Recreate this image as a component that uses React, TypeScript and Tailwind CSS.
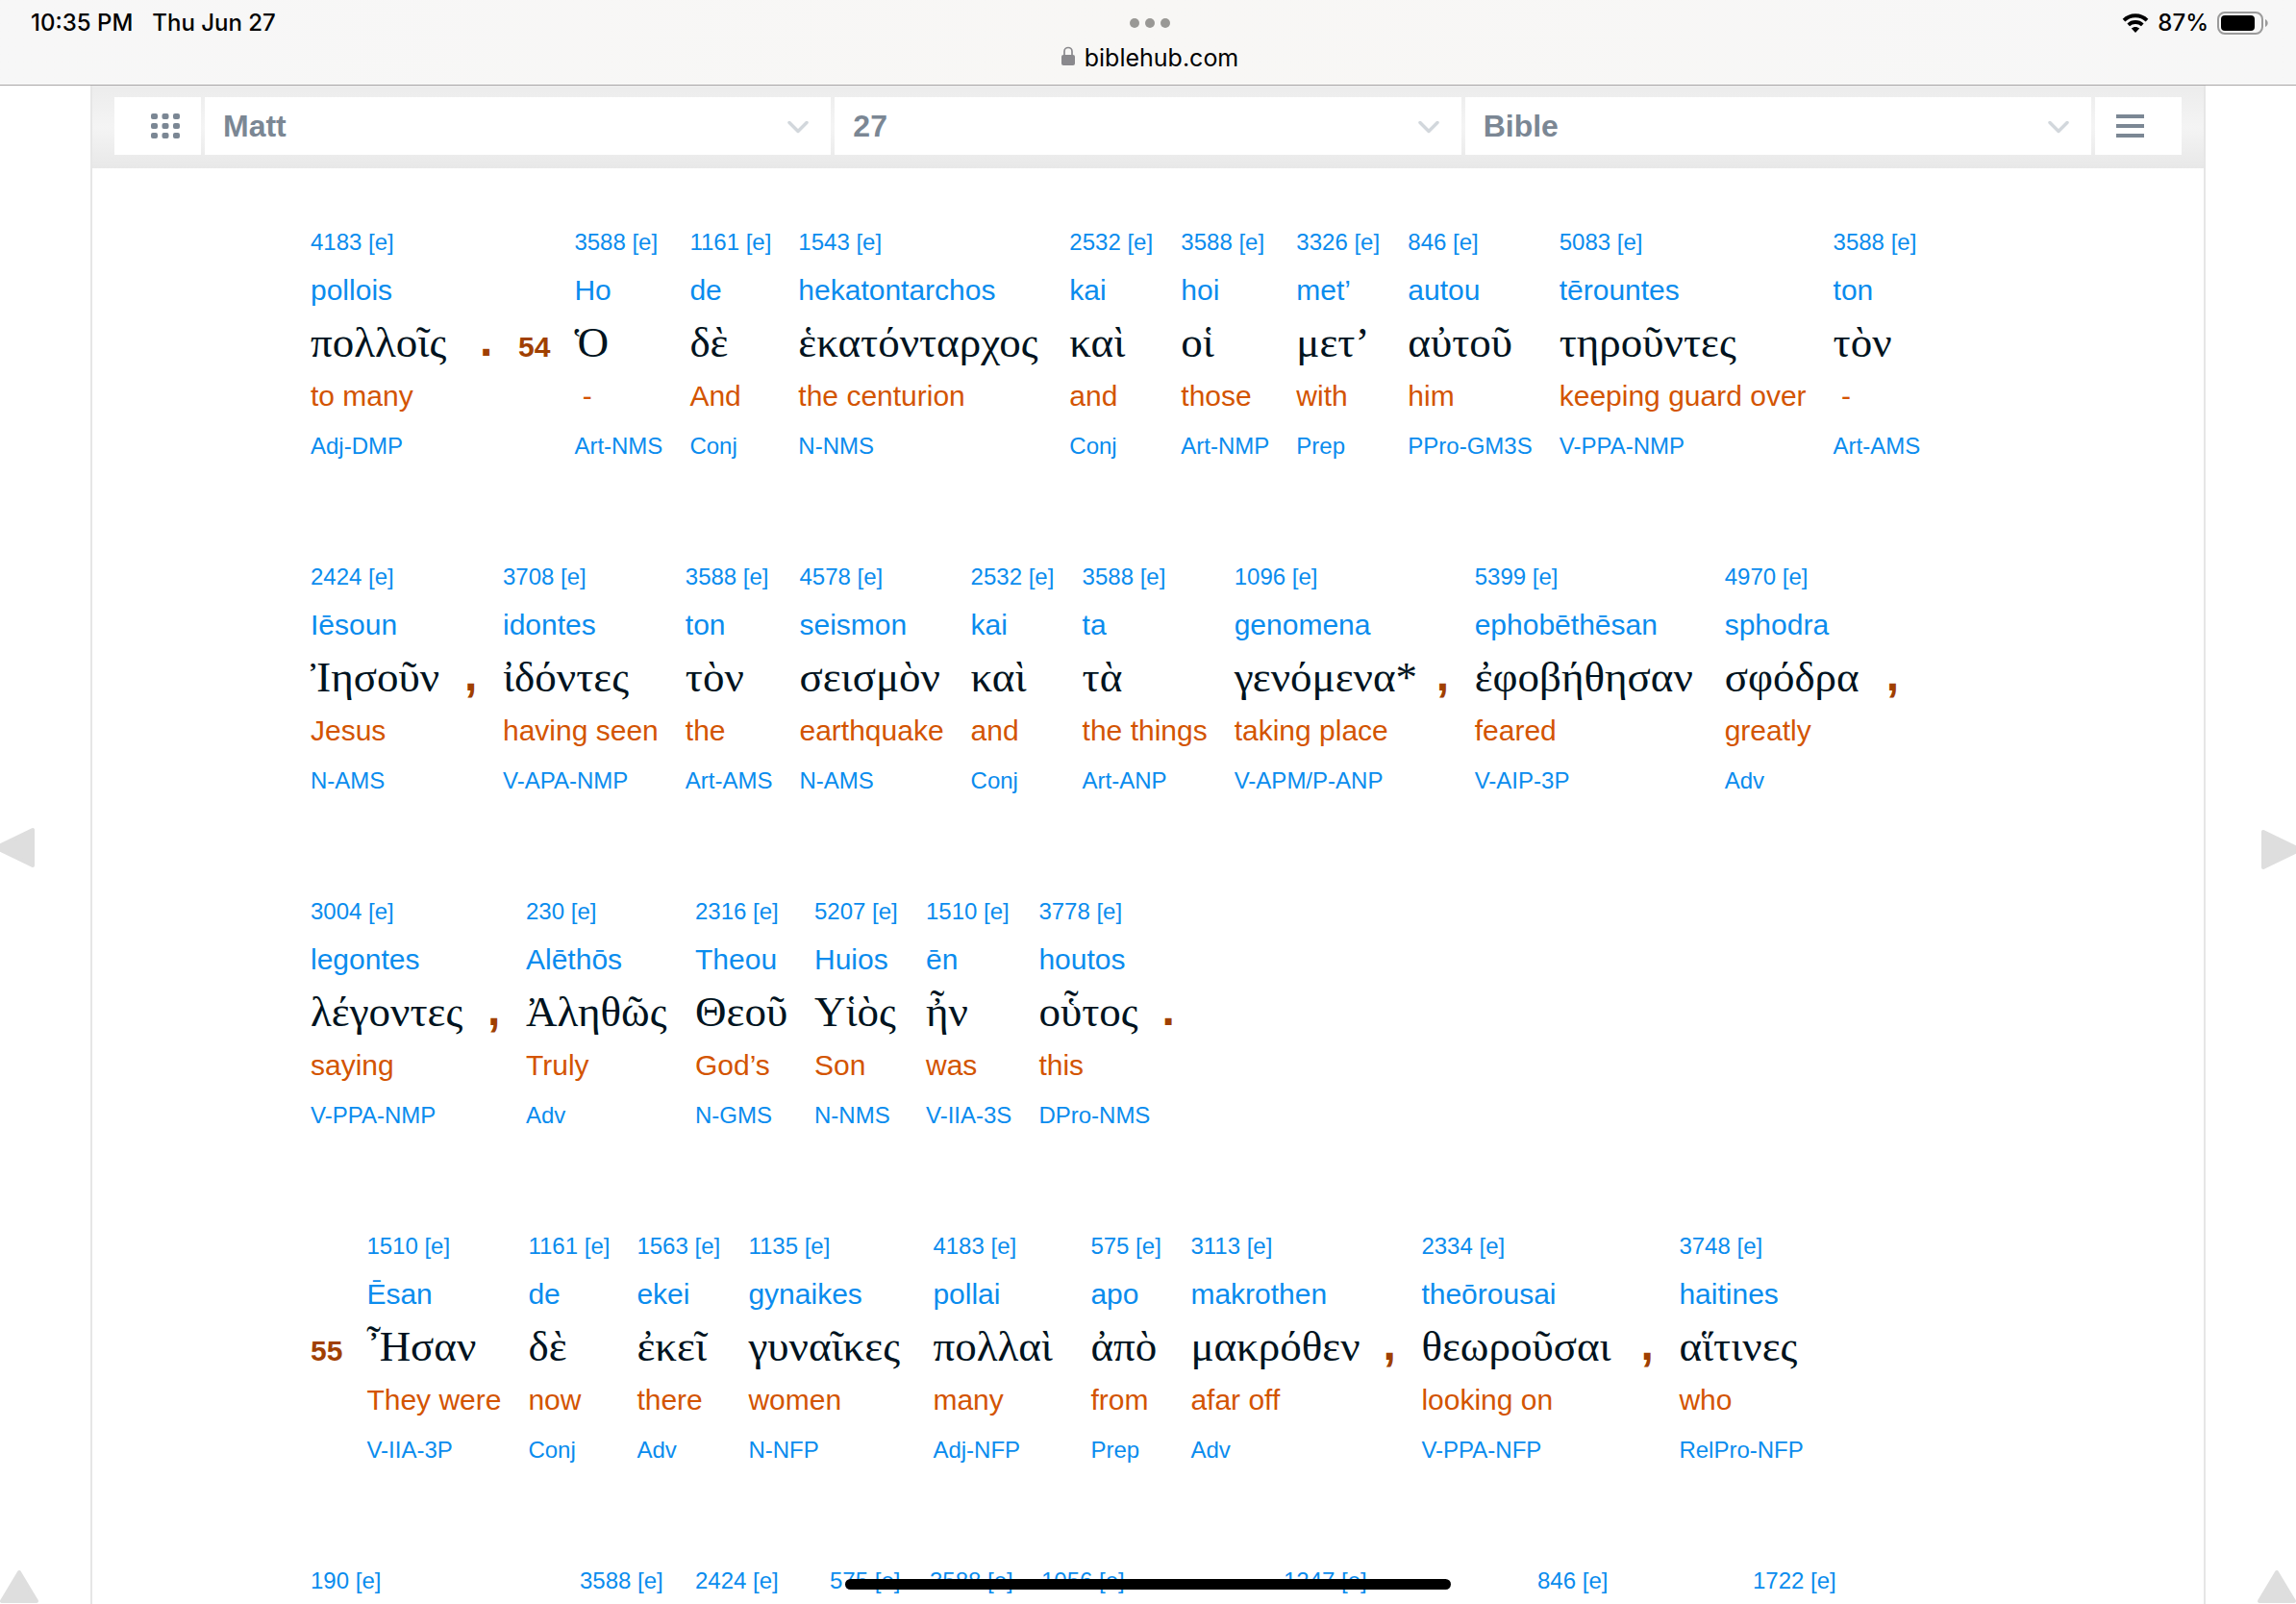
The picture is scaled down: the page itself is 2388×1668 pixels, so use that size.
import { ReactNode } from 'react';

interface Word {
  strongs: string;
  translit?: string;
  greek?: string;
  english?: string;
  parsing?: string;
  width?: string;
}

type Token = Word | { verse: string } | { mark: string };

const w = (
  strongs: string,
  translit: string,
  greek: string,
  english: string,
  parsing: string,
  width?: string,
): Word => ({ strongs, translit, greek, english, parsing, width });

const LINES: Token[][] = [
  [
    w('4183', 'pollois', 'πολλοῖς', 'to many', 'Adj-DMP', 'w-44'),
    { mark: '.' },
    { verse: '54' },
    w('3588', 'Ho', 'Ὁ', '\u00a0-', 'Art-NMS'),
    w('1161', 'de', 'δὲ', 'And', 'Conj'),
    w('1543', 'hekatontarchos', 'ἑκατόνταρχος', 'the centurion', 'N-NMS', 'w-[282px]'),
    w('2532', 'kai', 'καὶ', 'and', 'Conj', 'w-29'),
    w('3588', 'hoi', 'οἱ', 'those', 'Art-NMP'),
    w('3326', 'met’', 'μετ’', 'with', 'Prep', 'w-29'),
    w('846', 'autou', 'αὐτοῦ', 'him', 'PPro-GM3S'),
    w('5083', 'tērountes', 'τηροῦντες', 'keeping guard over', 'V-PPA-NMP'),
    w('3588', 'ton', 'τὸν', '\u00a0-', 'Art-AMS'),
  ],
  [
    w('2424', 'Iēsoun', 'Ἰησοῦν', 'Jesus', 'N-AMS', 'w-40'),
    { mark: ',' },
    w('3708', 'idontes', 'ἰδόντες', 'having seen', 'V-APA-NMP'),
    w('3588', 'ton', 'τὸν', 'the', 'Art-AMS'),
    w('4578', 'seismon', 'σεισμὸν', 'earthquake', 'N-AMS'),
    w('2532', 'kai', 'καὶ', 'and', 'Conj', 'w-29'),
    w('3588', 'ta', 'τὰ', 'the things', 'Art-ANP'),
    w('1096', 'genomena', 'γενόμενα*', 'taking place', 'V-APM/P-ANP', 'w-[210px]'),
    { mark: ',' },
    w('5399', 'ephobēthēsan', 'ἐφοβήθησαν', 'feared', 'V-AIP-3P', 'w-65'),
    w('4970', 'sphodra', 'σφόδρα', 'greatly', 'Adv', 'w-42'),
    { mark: ',' },
  ],
  [
    w('3004', 'legontes', 'λέγοντες', 'saying', 'V-PPA-NMP', 'w-46'),
    { mark: ',' },
    w('230', 'Alēthōs', 'Ἀληθῶς', 'Truly', 'Adv', 'w-44'),
    w('2316', 'Theou', 'Θεοῦ', 'God’s', 'N-GMS', 'w-31'),
    w('5207', 'Huios', 'Υἱὸς', 'Son', 'N-NMS', 'w-29'),
    w('1510', 'ēn', 'ἦν', 'was', 'V-IIA-3S'),
    w('3778', 'houtos', 'οὗτος', 'this', 'DPro-NMS', 'w-32'),
    { mark: '.' },
  ],
  [
    { verse: '55' },
    w('1510', 'Ēsan', 'Ἦσαν', 'They were', 'V-IIA-3P'),
    w('1161', 'de', 'δὲ', 'now', 'Conj'),
    w('1563', 'ekei', 'ἐκεῖ', 'there', 'Adv', 'w-29'),
    w('1135', 'gynaikes', 'γυναῖκες', 'women', 'N-NFP', 'w-48'),
    w('4183', 'pollai', 'πολλαὶ', 'many', 'Adj-NFP', 'w-41'),
    w('575', 'apo', 'ἀπὸ', 'from', 'Prep', 'w-26'),
    w('3113', 'makrothen', 'μακρόθεν', 'afar off', 'Adv', 'w-50'),
    { mark: ',' },
    w('2334', 'theōrousai', 'θεωροῦσαι', 'looking on', 'V-PPA-NFP', 'w-57'),
    { mark: ',' },
    w('3748', 'haitines', 'αἵτινες', 'who', 'RelPro-NFP'),
  ],
  [
    { strongs: '190', width: 'w-70' },
    { strongs: '3588', width: 'w-30' },
    { strongs: '2424', width: 'w-35' },
    { strongs: '575', width: 'w-26' },
    { strongs: '3588', width: 'w-29' },
    { strongs: '1056', width: 'w-63' },
    { strongs: '1247', width: 'w-66' },
    { strongs: '846', width: 'w-56' },
    { strongs: '1722', width: 'w-29' },
  ],
];

function WordColumn({ word }: { word: Word }) {
  return (
    <div
      className={`flex shrink-0 flex-col items-start whitespace-nowrap text-[#0a8cee] ${word.width ?? 'pr-7'}`}
    >
      <a href="#strongs" className="text-2xl leading-[48px]">
        {word.strongs} [e]
      </a>
      {word.translit && (
        <a href="#translit" className="text-3xl leading-[52px]">
          {word.translit}
        </a>
      )}
      {word.greek && (
        <span className="font-['Liberation_Serif',serif] text-[45px] leading-[56px] text-[#001320]">{word.greek}</span>
      )}
      {word.english && <span className="text-3xl leading-[56px] text-[#d35400]">{word.english}</span>}
      {word.parsing && (
        <a href="#parsing" className="text-2xl leading-[48px]">
          {word.parsing}
        </a>
      )}
    </div>
  );
}

function TokenView({ token }: { token: Token }) {
  if ('verse' in token) {
    return <b className="shrink-0 pt-[100px] pr-[25px] text-3xl leading-[66px] text-[#a04000]">{token.verse}</b>;
  }
  if ('mark' in token) {
    return <b className="w-10 shrink-0 pt-[98px] text-5xl leading-[56px] text-[#a04000]">{token.mark}</b>;
  }
  return <WordColumn word={token} />;
}

function NavSelect({ label, value }: { label: string; value: string }) {
  return (
    <div className="relative flex-1 bg-white">
      <select
        aria-label={label}
        defaultValue={value}
        className="h-full w-full appearance-none bg-transparent pl-[19px] text-[32px] font-bold text-[#7b8794] outline-none"
      >
        <option value={value}>{value}</option>
      </select>
      <svg
        viewBox="0 0 22 14"
        className="pointer-events-none absolute right-[23px] top-6 h-[14px] w-[22px]"
        fill="none"
        stroke="#d2d7dc"
        strokeWidth="3.500"
        strokeLinecap="round"
        strokeLinejoin="round"
      >
        <path d="M2 2.500l9 9 9-9" />
      </svg>
    </div>
  );
}

function EdgeArrow({ label, className, children }: { label: string; className: string; children: ReactNode }) {
  return (
    <a href="#page" aria-label={label} className={className}>
      <svg
        viewBox="0 0 40 40"
        className="h-10 w-10 overflow-visible"
        fill="#dedede"
        stroke="#dedede"
        strokeWidth="4"
        strokeLinejoin="round"
      >
        {children}
      </svg>
    </a>
  );
}

function StatusBar() {
  return (
    <header className="h-[89px] shrink-0 border-b border-[#a9a6a7] bg-linear-to-r from-[#f7f7f7] via-[#f8f7f5] to-[#f7f7f7] font-[Inter,sans-serif] text-black">
      <div className="grid h-12 grid-cols-[1fr_auto_1fr] items-center pr-7 pl-8 text-2xl font-medium">
        <div className="flex gap-5">
          <span>10:35 PM</span>
          <span>Thu Jun 27</span>
        </div>
        <button type="button" aria-label="Multitasking" className="flex justify-center gap-[6px]">
          <span className="size-[10px] rounded-full bg-[#999895]" />
          <span className="size-[10px] rounded-full bg-[#999895]" />
          <span className="size-[10px] rounded-full bg-[#999895]" />
        </button>
        <div className="flex items-center justify-end gap-[9px]">
          <svg viewBox="0 0 28 20" className="h-5 w-7" fill="none" stroke="#000">
            <path d="M2 7.200C8.600.6 19.400.6 26 7.200" strokeWidth="3.800" />
            <path d="M6.700 11.900c4.100-3.900 10.500-3.900 14.600 0" strokeWidth="3.800" />
            <path d="M14 20l-4.200-4.400c2.400-2.200 6-2.200 8.400 0z" fill="#000" stroke="none" />
          </svg>
          <span>87%</span>
          <svg viewBox="0 0 54 24" className="h-6 w-[54px]">
            <rect x="1" y="1" width="46" height="22" rx="7" fill="none" stroke="#9b9b9b" strokeWidth="2" />
            <rect x="4" y="4" width="35" height="16" rx="4" fill="#000" />
            <path d="M50 8c3.600 1.400 3.600 6.600 0 8z" fill="#9b9b9b" />
          </svg>
        </div>
      </div>
      <div className="flex justify-center gap-[10px] pl-1 text-[25px] leading-6">
        <svg viewBox="0 0 14 20" className="h-5 w-[14px]">
          <path d="M3 10V5.500a4 4 0 0 1 8 0V10" fill="none" stroke="#8a898d" strokeWidth="1.700" />
          <rect y="9" width="14" height="11" rx="2" fill="#8a898d" />
        </svg>
        <span>biblehub.com</span>
      </div>
    </header>
  );
}

export default function App() {
  return (
    <div className="relative flex h-screen flex-col overflow-hidden bg-white font-['Liberation_Sans',Arial,sans-serif]">
      <StatusBar />

      <main className="mx-[94px] flex-1 border-x-2 border-[#e6e6e6]">
        <nav className="flex h-[86px] gap-1 bg-linear-to-b from-[#ececec] via-[#f4f4f4] to-[#e8e8e8] px-[23px] pt-3 pb-[14px]">
          <button type="button" aria-label="All books" className="flex w-[90px] items-center bg-white pl-[38px]">
            <svg viewBox="0 0 30 26" className="h-[26px] w-[30px]" fill="#7b8794">
              {[0, 10, 20].map((y) =>
                [0, 11.5, 23].map((x) => <rect key={`${x}-${y}`} x={x} y={y} width="7" height="6" rx="2" />),
              )}
            </svg>
          </button>
          <NavSelect label="Book" value="Matt" />
          <NavSelect label="Chapter" value="27" />
          <NavSelect label="Section" value="Bible" />
          <button type="button" aria-label="Menu" className="flex w-[90px] items-center bg-white pl-[22px]">
            <svg viewBox="0 0 29 26" className="h-[26px] w-[29px]" fill="#7b8794">
              <path d="M0 1h29v4H0zM0 11h29v4H0zM0 21h29v4H0z" />
            </svg>
          </button>
        </nav>

        <article className="flex flex-col gap-[88px] pt-[53px] pl-[227px]">
          {LINES.map((line, i) => (
            <div key={i} className="flex items-start">
              {line.map((token, j) => (
                <TokenView key={j} token={token} />
              ))}
            </div>
          ))}
        </article>
      </main>

      {/* Page turn arrows pinned to the window edges */}
      <EdgeArrow label="Previous chapter" className="absolute top-[861px] left-0">
        <path d="M34 2v37L-4 20.500z" />
      </EdgeArrow>
      <EdgeArrow label="Next chapter" className="absolute top-[863px] right-0">
        <path d="M6 2v37l38-18.500z" />
      </EdgeArrow>
      <EdgeArrow label="Top of page" className="absolute -bottom-[3px] left-0">
        <path d="M20 4L2 34h36z" />
      </EdgeArrow>
      <EdgeArrow label="Top of page" className="absolute right-0 -bottom-[3px]">
        <path d="M20 4L2 34h36z" />
      </EdgeArrow>

      <div className="absolute bottom-[15px] left-1/2 h-[11px] w-[630px] -translate-x-1/2 rounded-full bg-black" />
    </div>
  );
}
